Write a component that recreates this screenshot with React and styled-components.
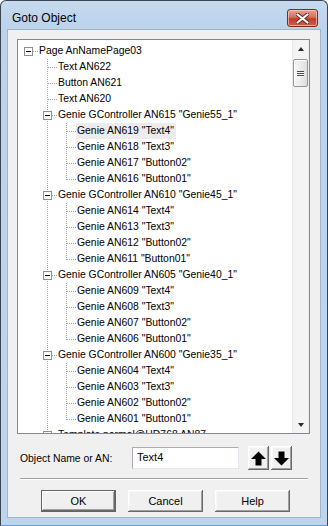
import React from "react";
import styled, { createGlobalStyle } from "styled-components";

const GlobalStyle = createGlobalStyle`
  html, body {
    margin: 0;
    padding: 0;
    overflow: hidden;
  }
  body {
    width: 328px;
    height: 526px;
    background: #ffffff;
  }
`;

const genie = (id, name, kids) => ({
  label: `Genie GController AN${id} "${name}"`,
  open: true,
  children: kids.map(([an, txt]) => ({ label: `Genie AN${an} "${txt}"` })),
});

const tree = {
  label: "Page AnNamePage03",
  open: true,
  children: [
    { label: "Text AN622" },
    { label: "Button AN621" },
    { label: "Text AN620" },
    genie("615", "Genie55_1", [
      ["619", "Text4"],
      ["618", "Text3"],
      ["617", "Button02"],
      ["616", "Button01"],
    ]),
    genie("610", "Genie45_1", [
      ["614", "Text4"],
      ["613", "Text3"],
      ["612", "Button02"],
      ["611", "Button01"],
    ]),
    genie("605", "Genie40_1", [
      ["609", "Text4"],
      ["608", "Text3"],
      ["607", "Button02"],
      ["606", "Button01"],
    ]),
    genie("600", "Genie35_1", [
      ["604", "Text4"],
      ["603", "Text3"],
      ["602", "Button02"],
      ["601", "Button01"],
    ]),
    { label: "Template normal@HD768 AN87", open: false, children: [{ label: "x" }] },
  ],
};

// flatten the tree into rows; trail[k] = ancestor at level k still has a sibling below
const flatten = (node, level, isLast, trail, out) => {
  out.push({ ...node, level, isLast, trail });
  if (node.open && node.children) {
    node.children.forEach((c, i) =>
      flatten(c, level + 1, i === node.children.length - 1, [...trail, !isLast && level > 0], out)
    );
  }
  return out;
};

const rows = flatten(tree, 0, true, [], []);

const DOT = "#a0a0a0";

const Guide = ({ vertical, horizontal, box }) => (
  <GuideSvg width="19" height="16" viewBox="0 0 19 16">
    {vertical && (
      <line
        x1="9.5"
        y1="0"
        x2="9.5"
        y2={vertical === "top" ? 9 : 16}
        stroke={DOT}
        strokeDasharray="1 1"
      />
    )}
    {horizontal && (
      <line x1="10" y1="8.5" x2="19" y2="8.5" stroke={DOT} strokeDasharray="1 1" />
    )}
    {box && (
      <g>
        <rect x="5.5" y="4.5" width="8" height="8" fill="#fff" stroke="#8e8f8f" />
        <line x1="7" y1="8.5" x2="12" y2="8.5" stroke="#000" />
        {box === "plus" && <line x1="9.5" y1="6" x2="9.5" y2="11" stroke="#000" />}
      </g>
    )}
  </GuideSvg>
);

const ArrowIcon = ({ down }) => (
  <svg width="15" height="15" viewBox="0 0 15 15">
    <polygon
      points="7.5,0.5 0,8 4.5,8 4.5,14.5 10.5,14.5 10.5,8 15,8"
      fill="#000"
      transform={down ? "rotate(180 7.5 7.5)" : undefined}
    />
  </svg>
);

const CloseIcon = () => (
  <svg width="13" height="11" viewBox="0 0 13 11">
    <path
      d="M1.5 1.5 L11.5 9.5 M11.5 1.5 L1.5 9.5"
      stroke="#5a2a22"
      strokeWidth="4"
      strokeLinecap="round"
    />
    <path
      d="M1.5 1.5 L11.5 9.5 M11.5 1.5 L1.5 9.5"
      stroke="#ffffff"
      strokeWidth="2.2"
      strokeLinecap="round"
    />
  </svg>
);

const App = () => {
  return (
    <>
      <GlobalStyle />
      <Window>
        <TitleBar>
          <Title>Goto Object</Title>
          <CloseButton>
            <CloseIcon />
          </CloseButton>
        </TitleBar>
        <Client>
          <TreeBox>
            <TreeList>
              {rows.map((r, idx) => (
                <Row key={idx}>
                  {r.trail.map((has, i) => (
                    <Guide key={i} vertical={has ? "full" : null} />
                  ))}
                  {r.level === 0 ? (
                    <Guide horizontal box="minus" />
                  ) : (
                    <Guide
                      vertical={r.isLast ? "top" : "full"}
                      horizontal
                      box={r.children ? (r.open ? "minus" : "plus") : null}
                    />
                  )}
                  <Label $selected={idx === 5}>{r.label}</Label>
                </Row>
              ))}
            </TreeList>
            <ScrollBar>
              <ScrollBtn>
                <Caret />
              </ScrollBtn>
              <Thumb>
                <Grip />
                <Grip />
                <Grip />
              </Thumb>
              <ScrollTrack />
              <ScrollBtn>
                <Caret $down />
              </ScrollBtn>
            </ScrollBar>
          </TreeBox>

          <FieldRow>
            <FieldLabel>Object Name or AN:</FieldLabel>
            <TextInput>Text4</TextInput>
            <ArrowGroup>
              <ClassicButton $w={21} $h={24}>
                <ArrowIcon />
              </ClassicButton>
              <ClassicButton $w={21} $h={24}>
                <ArrowIcon down />
              </ClassicButton>
            </ArrowGroup>
          </FieldRow>

          <Separator />

          <ButtonRow>
            <ClassicButton $w={75} $h={22} $default>
              OK
            </ClassicButton>
            <ClassicButton $w={75} $h={22}>
              Cancel
            </ClassicButton>
            <ClassicButton $w={75} $h={22}>
              Help
            </ClassicButton>
          </ButtonRow>
        </Client>
      </Window>
    </>
  );
};

const Window = styled.div`
  width: 328px;
  height: 526px;
  box-sizing: border-box;
  display: flex;
  flex-direction: column;
  padding: 0 6px 7px 6px;
  border: 1px solid #3d4450;
  border-bottom-color: #36b4dc;
  border-radius: 6px 6px 0 0;
  background: linear-gradient(to bottom, #c6d9ee 0px, #bcd3ec 28px, #bcd4ec 100%);
`;

const TitleBar = styled.div`
  height: 28px;
  box-sizing: border-box;
  padding-top: 6px;
  display: flex;
  align-items: center;
  justify-content: space-between;
`;

const Title = styled.div`
  padding-left: 5px;
  font-family: "Liberation Sans", Arial, sans-serif;
  font-size: 12px;
  color: #000;
`;

const CloseButton = styled.div`
  width: 31px;
  height: 18px;
  box-sizing: border-box;
  margin-right: 3px;
  border: 1px solid #7a2a22;
  border-radius: 3px;
  background: linear-gradient(to bottom, #e9a08e 0%, #d9705c 45%, #c53a28 55%, #d0604a 100%);
  display: flex;
  align-items: center;
  justify-content: center;
  box-shadow: inset 0 0 0 1px rgba(255, 220, 210, 0.6);
`;

const Client = styled.div`
  flex: 1;
  display: flex;
  flex-direction: column;
  background: #f0f0f0;
  border: 1px solid #9fb4cd;
  padding: 9px 9px 0 9px;
`;

const TreeBox = styled.div`
  width: 293px;
  height: 395px;
  box-sizing: border-box;
  border: 1px solid #828790;
  background: #fff;
  display: flex;
  overflow: hidden;
`;

const TreeList = styled.div`
  flex: 1;
  overflow: hidden;
  padding: 3px 0 0 1px;
`;

const Row = styled.div`
  display: flex;
  height: 16px;
  align-items: stretch;
`;

const GuideSvg = styled.svg`
  display: block;
  flex: none;
  shape-rendering: crispEdges;
`;

const Label = styled.div`
  padding: 0 2px 0 1px;
  line-height: 16px;
  white-space: nowrap;
  font-family: "Liberation Sans", Tahoma, sans-serif;
  font-size: 10.4px;
  color: #000;
  background: ${(p) => (p.$selected ? "#ececec" : "transparent")};
`;

const ScrollBar = styled.div`
  width: 17px;
  flex: none;
  display: flex;
  flex-direction: column;
  background: linear-gradient(to right, #e6e6e6 0, #f4f4f4 2px, #f4f4f4 15px, #ececec 17px);
`;

const ScrollBtn = styled.div`
  height: 17px;
  display: flex;
  align-items: center;
  justify-content: center;
`;

const Caret = styled.div`
  width: 0;
  height: 0;
  border-left: 3.5px solid transparent;
  border-right: 3.5px solid transparent;
  ${(p) =>
    p.$down ? "border-top: 4px solid #2b2b2b;" : "border-bottom: 4px solid #2b2b2b;"}
`;

const Thumb = styled.div`
  height: 28px;
  margin: 2px 1px 0 1px;
  box-sizing: border-box;
  border: 1px solid #979797;
  border-radius: 2px;
  background: linear-gradient(to right, #f6f6f6 0%, #ececec 50%, #dcdcdc 100%);
  box-shadow: inset 1px 1px 0 #ffffff;
  display: flex;
  flex-direction: column;
  align-items: center;
  justify-content: center;
  gap: 1px;
`;

const Grip = styled.div`
  width: 7px;
  height: 1px;
  background: #4a4a4a;
  box-shadow: 0 1px 0 #f8f8f8;
`;

const ScrollTrack = styled.div`
  flex: 1;
`;

const FieldRow = styled.div`
  display: flex;
  align-items: center;
  height: 24px;
  margin-top: 12px;
  padding-left: 3px;
`;

const FieldLabel = styled.div`
  width: 112px;
  font-family: "Liberation Sans", Tahoma, sans-serif;
  font-size: 10.4px;
  color: #000;
`;

const TextInput = styled.div`
  width: 107px;
  height: 22px;
  box-sizing: border-box;
  padding: 3px 0 0 4px;
  background: #fff;
  border: 1px solid #abadb3;
  border-right-color: #e3e9ef;
  border-bottom-color: #e3e9ef;
  font-family: "Liberation Sans", Tahoma, sans-serif;
  font-size: 11px;
  color: #000;
`;

const ArrowGroup = styled.div`
  display: flex;
  gap: 2px;
  margin-left: 9px;
`;

const ClassicButton = styled.div`
  width: ${(p) => p.$w}px;
  height: ${(p) => p.$h}px;
  box-sizing: border-box;
  display: flex;
  align-items: center;
  justify-content: center;
  background: #f0f0f0;
  font-family: "Liberation Sans", Tahoma, sans-serif;
  font-size: 11px;
  color: #000;
  box-shadow: ${(p) =>
    p.$default
      ? "inset 0 0 0 1px #646464, inset -2px -2px 0 #696969, inset 2px 2px 0 #ffffff, inset -3px -3px 0 #a0a0a0"
      : "inset -1px -1px 0 #696969, inset 1px 1px 0 #ffffff, inset -2px -2px 0 #a0a0a0, inset 2px 2px 0 #f8f8f8"};
`;

const Separator = styled.div`
  height: 1px;
  margin: 8px 3px 0 3px;
  background: #a0a0a0;
  border-bottom: 1px solid #ffffff;
`;

const ButtonRow = styled.div`
  display: flex;
  gap: 12px;
  margin-top: 10px;
  padding-left: 24px;
`;

export default App;
